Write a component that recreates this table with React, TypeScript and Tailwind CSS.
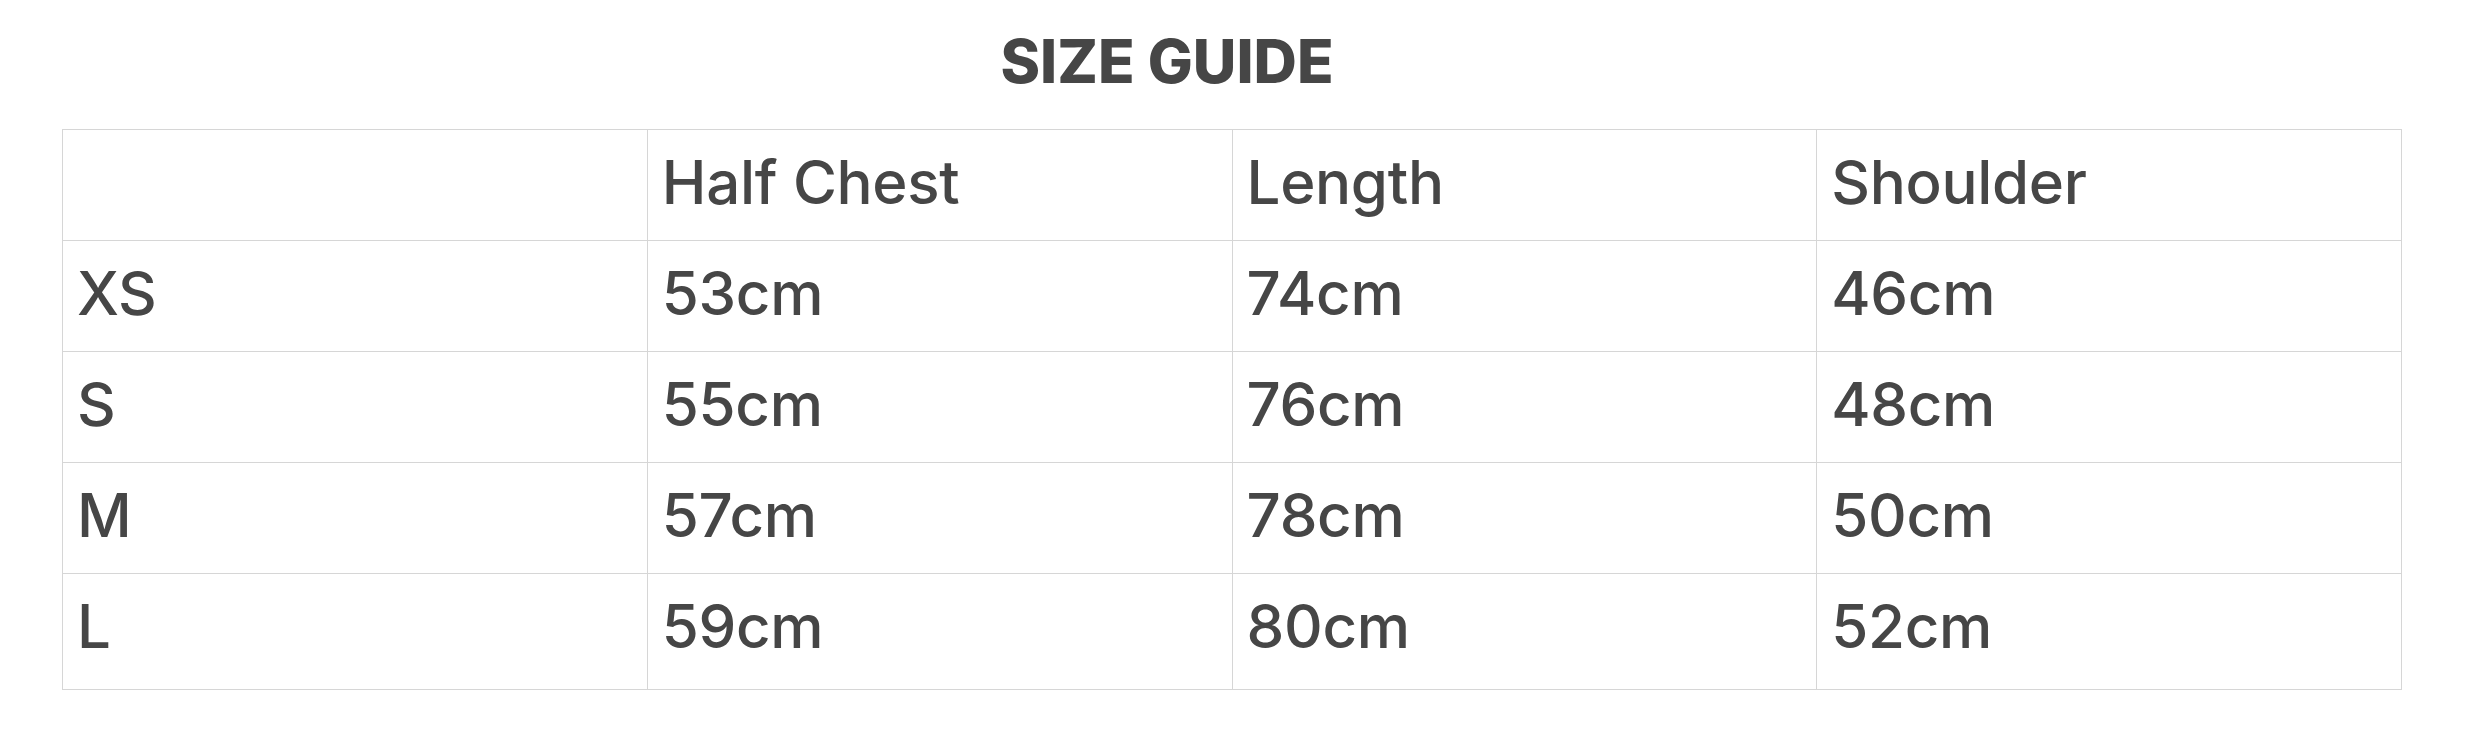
const headers = ["", "Half Chest", "Length", "Shoulder"];

const rows = [
  ["XS", "53cm", "74cm", "46cm"],
  ["S", "55cm", "76cm", "48cm"],
  ["M", "57cm", "78cm", "50cm"],
  ["L", "59cm", "80cm", "52cm"],
];

export default function App() {
  const all = [headers, ...rows];

  return (
    <div className="min-h-[750px] w-full bg-white font-['Inter',sans-serif] text-[#464646]">
      <h2 className="pt-[25px] pr-[140px] text-center text-[60px] leading-[72px] font-extrabold">
        SIZE GUIDE
      </h2>
      <div className="ml-[62px] mt-[32px] w-[2340px] border-t border-l border-[#d6d6d6]">
        {all.map((row, i) => (
          <div key={i} className="grid grid-cols-4">
            {row.map((cell, j) => (
              <div
                key={j}
                className={
                  i === all.length - 1
                    ? "border-r border-b border-[#d6d6d6] pl-[14px] pt-[16px] pb-[27px] text-[60px] leading-[72px] font-medium tracking-[-0.3px]"
                    : "border-r border-b border-[#d6d6d6] pl-[14px] pt-[16px] pb-[22px] text-[60px] leading-[72px] font-medium tracking-[-0.3px]"
                }
              >
                {cell || "\u00a0"}
              </div>
            ))}
          </div>
        ))}
      </div>
    </div>
  );
}
